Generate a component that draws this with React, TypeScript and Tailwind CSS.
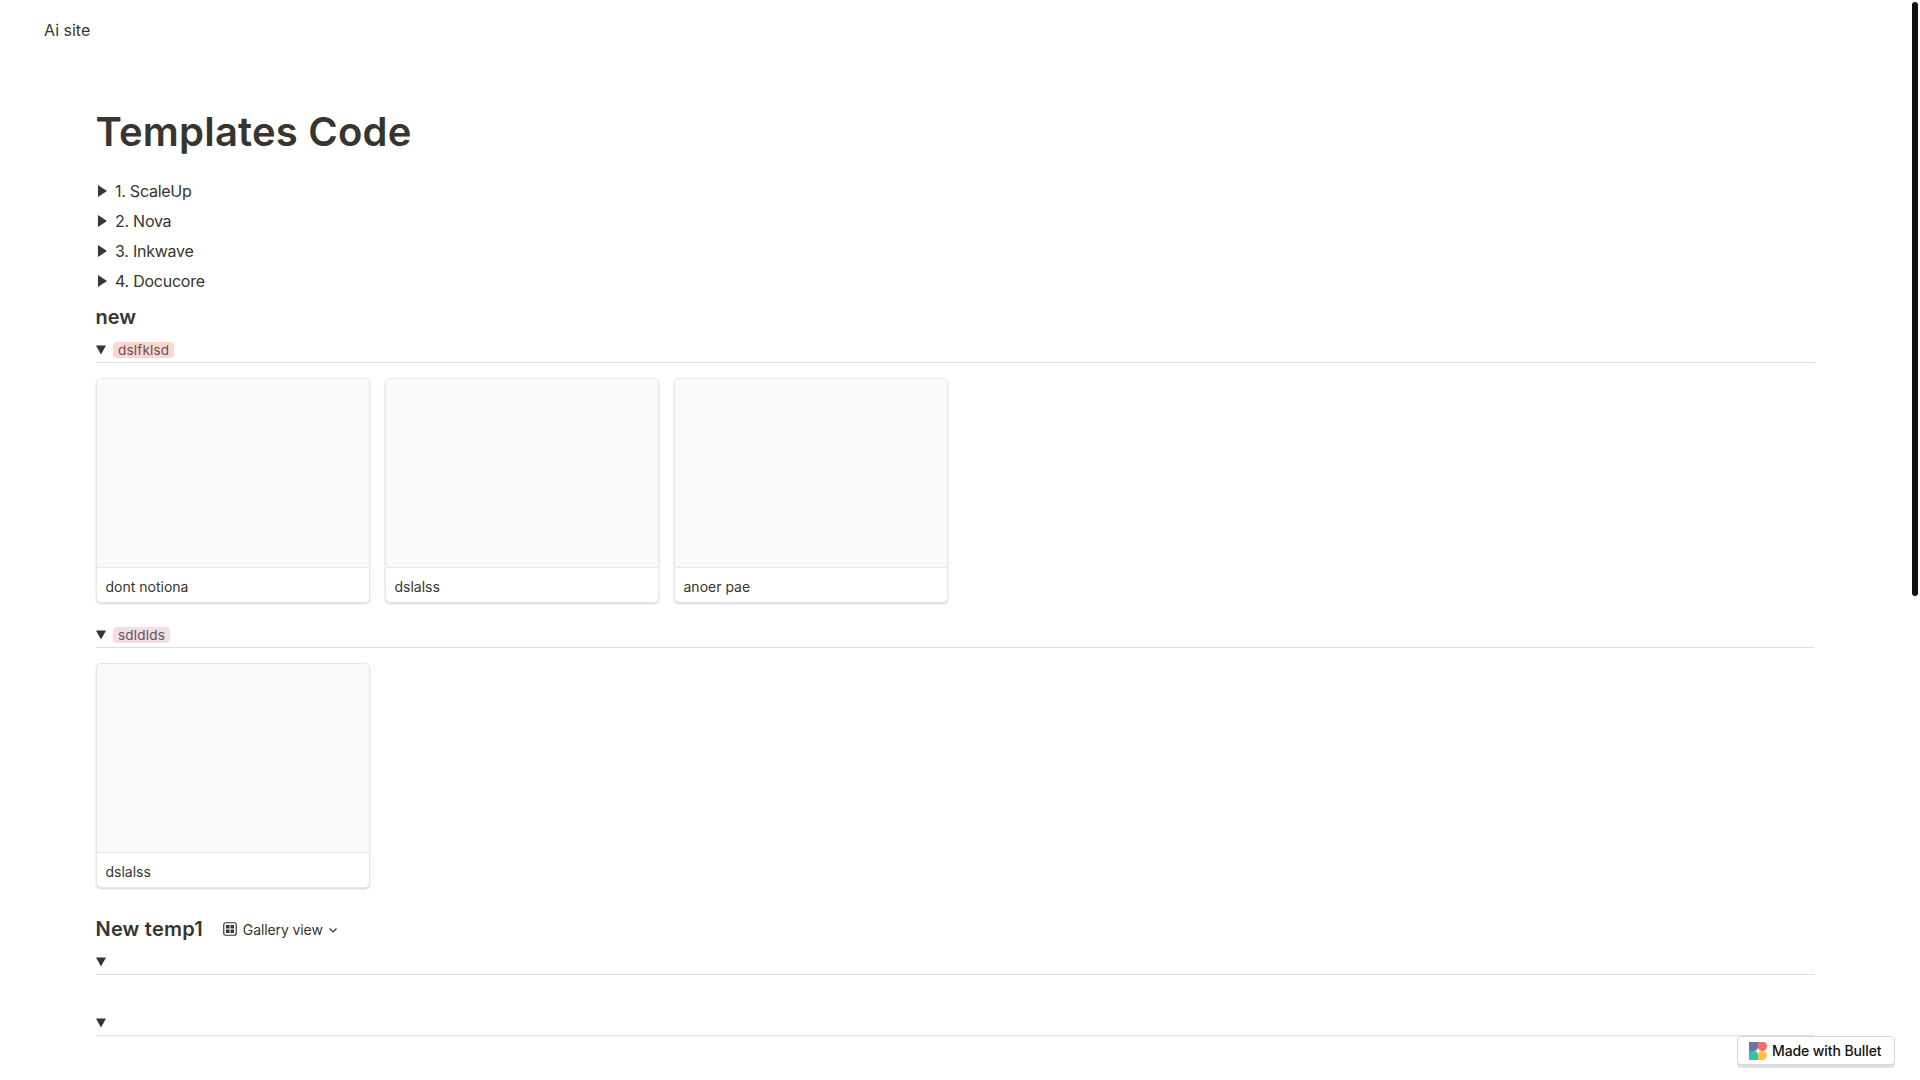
const rows = ["1. ScaleUp", "2. Nova", "3. Inkwave", "4. Docucore"];

const Caret = () => (
  <svg width="10" height="10" viewBox="0 0 10 10" className="ml-[0.5px] mt-[1px] shrink-0">
    <path d="M0 .5h10L5 9.5z" fill="#37352f" />
  </svg>
);

const Card = ({ title }: { title: string }) => (
  <div className="w-[274px] h-[225px] rounded-[5px] border border-[#e7e7e7] shadow-[0_1px_2px_rgba(0,0,0,0.18)] bg-white overflow-hidden flex flex-col">
    <div className="h-[189px] shrink-0 bg-[#fafafa] border-b border-[#e7e7e7]" />
    <div className="px-[9px] pt-[10px] text-[14px] leading-[18px] text-[#37352f]">{title}</div>
  </div>
);

const GroupHeader = ({ label, color }: { label?: string; color?: string }) => (
  <div className="h-[25px] flex items-center gap-[7px] border-b border-[#dedede] pb-[1px]">
    <Caret />
    {label && (
      <span className={`h-[16px] px-[5px] rounded-[4px] text-[13.5px] leading-[16px] tracking-[0.2px] text-[#5c5750] ${color}`}>
        {label}
      </span>
    )}
  </div>
);

export default function App() {
  return (
    <div className="relative h-screen overflow-hidden bg-white text-[#37352f] font-['Inter',sans-serif]">
      <div className="pl-[44px] pt-[20px] text-[16px] leading-[20px]">Ai site</div>

      <div className="pl-[95.5px] pr-[105px]">
        <h1 className="mt-[68px] text-[40px] leading-[48px] font-semibold tracking-[0.2px]">Templates Code</h1>

        <div className="mt-[20px] flex flex-col">
          {rows.map((row) => (
            <div key={row} className="h-[30px] flex items-center gap-[8px] text-[16px] tracking-[-0.25px]">
              <svg width="9" height="12" viewBox="0 0 9 12" className="ml-[2.5px] shrink-0">
                <path d="M0 0l9 6-9 6z" fill="#37352f" />
              </svg>
              <span>{row}</span>
            </div>
          ))}
        </div>

        <h2 className="mt-[7px] text-[20px] leading-[28px] font-semibold">new</h2>

        <div className="mt-[7px]">
          <GroupHeader label="dslfklsd" color="bg-[#ffd5d0]" />
          <div className="mt-[15px] flex gap-[15px]">
            <Card title="dont notiona" />
            <Card title="dslalss" />
            <Card title="anoer pae" />
          </div>
        </div>

        <div className="mt-[20px]">
          <GroupHeader label="sdldlds" color="bg-[#f3dde8]" />
          <div className="mt-[15px] flex gap-[15px]">
            <Card title="dslalss" />
          </div>
        </div>

        <div className="mt-[27px] h-[28px] flex items-center">
          <h2 className="text-[20px] leading-[28px] font-semibold tracking-[0.2px]">New temp1</h2>
          <svg width="14" height="14" viewBox="0 0 14 14" className="ml-[20px]" fill="none">
            <rect x="0.75" y="0.75" width="12.5" height="12.5" rx="2" stroke="#37352f" strokeWidth="1.2" />
            <rect x="3" y="3" width="3.5" height="3.5" fill="#37352f" />
            <rect x="7.5" y="3" width="3.5" height="3.5" fill="#37352f" />
            <rect x="3" y="7.5" width="3.5" height="3.5" fill="#37352f" />
            <rect x="7.5" y="7.5" width="3.5" height="3.5" fill="#37352f" />
          </svg>
          <span className="ml-[6px] text-[14px] tracking-[-0.1px]">Gallery view</span>
          <svg width="10" height="10" viewBox="0 0 10 10" fill="none" className="ml-[5px] mt-[2px]">
            <path d="M1.5 3.5L5 7l3.5-3.5" stroke="#37352f" strokeWidth="1.2" />
          </svg>
        </div>

        <div className="mt-[7px]">
          <GroupHeader />
        </div>
        <div className="mt-[36px]">
          <GroupHeader />
        </div>
      </div>

      <div className="absolute right-[25px] bottom-[15px] h-[29px] w-[158px] flex items-center gap-[5px] pl-[11px] bg-white rounded-[4px] border border-[#d5d9de] shadow-[0_3px_0_#dfe2e5] text-[14px] font-medium text-[#111111]">
        <svg width="18" height="18" viewBox="0 0 18 18" className="shrink-0">
          <path d="M0 0h9v9H0z" fill="#6678ad" />
          <path d="M9 0h5a4 4 0 0 1 4 4.5A4.5 4.5 0 0 1 13.5 9H9z" fill="#f46f6b" />
          <path d="M0 9h9v9H0z" fill="#35bfae" />
          <path d="M9 9h4.5A4.5 4.5 0 0 1 18 13.5 4.5 4.5 0 0 1 13.5 18H9z" fill="#fcc23f" />
          <path d="M9 5.5l.9 2.6 2.6.9-2.6.9-.9 2.6-.9-2.6-2.6-.9 2.6-.9z" fill="#ffffff" />
        </svg>
        <span className="tracking-[-0.1px]">Made with Bullet</span>
      </div>

      <div className="absolute right-[2px] top-[2px] h-[594px] w-[6px] rounded-full bg-[#111111]" />
    </div>
  );
}
